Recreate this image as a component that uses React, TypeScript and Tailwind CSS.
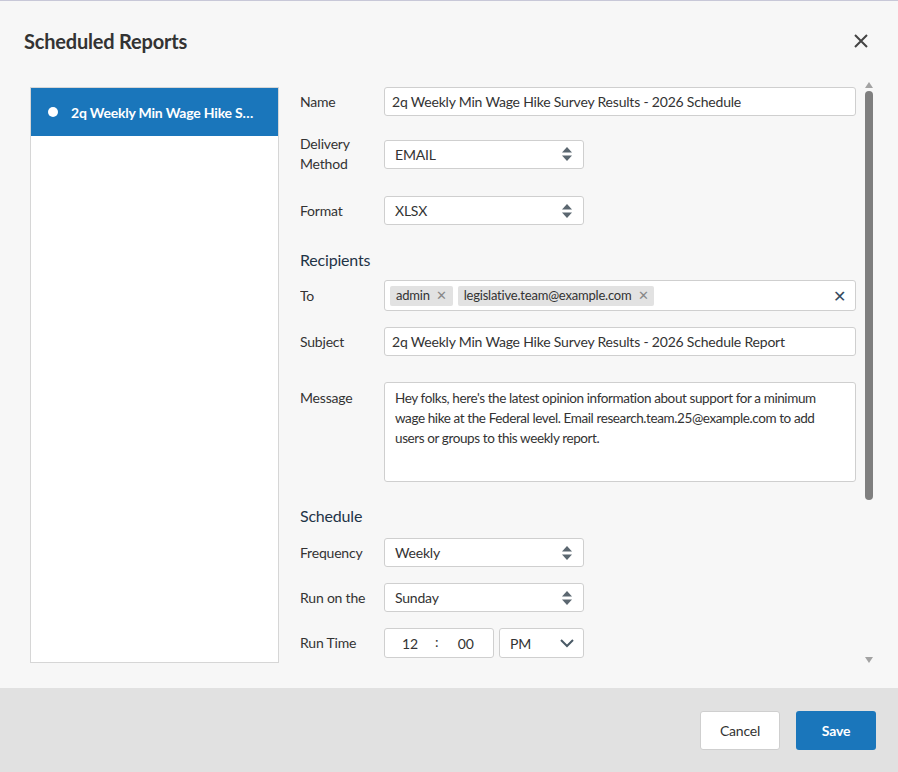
const font = { fontFamily: '"Source Sans Pro", Lato, "Liberation Sans", sans-serif', letterSpacing: '-0.2px' };

function Updown() {
  return (
    <svg width="10" height="14" viewBox="0 0 10 14" className="fill-[#5b6770]">
      <path d="M5 0 L10 5.5 H0 Z" />
      <path d="M5 14 L10 8.5 H0 Z" />
    </svg>
  );
}

function Select({ value }: { value: string }) {
  return (
    <div className="w-[200px] h-[29px] bg-white border border-[#cfcfcf] rounded-[3px] flex items-center justify-between pl-[10px] pr-[11px] text-[14px] text-[#333]">
      <span>{value}</span>
      <Updown />
    </div>
  );
}

function Row({ label, children, className = '' }: { label: React.ReactNode; children: React.ReactNode; className?: string }) {
  return (
    <div className={'flex items-center ' + className}>
      <div className="w-[84px] shrink-0 text-[14px] text-[#333] leading-[20px]">{label}</div>
      {children}
    </div>
  );
}

function Chip({ text }: { text: string }) {
  return (
    <span className="h-[20px] bg-[#e2e2e2] rounded-[2px] px-[6px] flex items-center gap-[6px] text-[13px] text-[#333]">
      {text}
      <span className="text-[#888] text-[13px]">✕</span>
    </span>
  );
}

export default function App() {
  return (
    <div style={font} className="w-[898px] h-[772px] bg-[#f7f7f7] flex flex-col border-t border-[#c8c8d8] overflow-hidden">
      <div className="h-[80px] flex items-center justify-between pl-[24px] pr-[30px] shrink-0">
        <h1 className="text-[20px] font-bold text-[#333]">Scheduled Reports</h1>
        <svg width="14" height="14" viewBox="0 0 14 14" className="stroke-[#444]" strokeWidth="2">
          <path d="M1 1 L13 13 M13 1 L1 13" />
        </svg>
      </div>
      <div className="flex-1 flex pl-[30px] pr-[22px] pb-[25px] gap-[21px] min-h-0">
        <div className="w-[249px] bg-white border border-[#d6d6d6] h-[576px] mt-[6px]">
          <div className="h-[48px] bg-[#1a76bb] flex items-center pl-[17px] gap-[13px] text-white text-[14px] font-bold">
            <span className="w-[10px] h-[10px] shrink-0 rounded-full bg-white" />
            <span className="truncate pr-[20px]">2q Weekly Min Wage Hike Survey Results - 2026</span>
          </div>
        </div>
        <div className="flex-1 flex min-h-0 mt-[6px] h-[576px]">
          <div className="flex-1 overflow-hidden">
            <Row label="Name">
              <div className="flex-1 h-[29px] bg-white border border-[#cfcfcf] rounded-[3px] flex items-center px-[7px] text-[14px] text-[#333]">
                2q Weekly Min Wage Hike Survey Results - 2026 Schedule
              </div>
            </Row>
            <Row label={<>Delivery<br />Method</>} className="mt-[18px]">
              <Select value="EMAIL" />
            </Row>
            <Row label="Format" className="mt-[22px]">
              <Select value="XLSX" />
            </Row>
            <div className="mt-[24px] text-[16px] text-[#1f3447] leading-[22px]">Recipients</div>
            <Row label="To" className="mt-[9px]">
              <div className="flex-1 h-[31px] bg-white border border-[#cfcfcf] rounded-[3px] flex items-center px-[5px] gap-[5px]">
                <Chip text="admin" />
                <Chip text="legislative.team@example.com" />
                <span className="ml-auto mr-[4px] text-[#34495e] text-[16px]">✕</span>
              </div>
            </Row>
            <Row label="Subject" className="mt-[16px]">
              <div className="flex-1 h-[29px] bg-white border border-[#cfcfcf] rounded-[3px] flex items-center px-[7px] text-[14px] text-[#333]">
                2q Weekly Min Wage Hike Survey Results - 2026 Schedule Report
              </div>
            </Row>
            <div className="flex mt-[26px]">
              <div className="w-[84px] shrink-0 text-[14px] text-[#333] pt-[5px]">Message</div>
              <div className="flex-1 h-[100px] bg-white border border-[#cfcfcf] rounded-[3px] px-[10px] py-[5px] text-[13.5px] tracking-[-0.4px] leading-[20px] text-[#333]">
                Hey folks, here's the latest opinion information about support for a minimum wage hike at the Federal level. Email research.team.25@example.com to add users or groups to this weekly report.
              </div>
            </div>
            <div className="mt-[23px] text-[16px] text-[#1f3447] leading-[22px]">Schedule</div>
            <Row label="Frequency" className="mt-[11px]">
              <Select value="Weekly" />
            </Row>
            <Row label="Run on the" className="mt-[16px]">
              <Select value="Sunday" />
            </Row>
            <Row label="Run Time" className="mt-[16px]">
              <div className="w-[110px] h-[30px] bg-white border border-[#cfcfcf] rounded-[3px] flex items-center text-[14px] text-[#333]">
                <span className="w-[50px] text-center">12</span>
                <span className="-mt-[4px]">:</span>
                <span className="flex-1 text-center">00</span>
              </div>
              <div className="ml-[5px] w-[85px] h-[30px] bg-white border border-[#cfcfcf] rounded-[3px] flex items-center justify-between pl-[10px] pr-[9px] text-[14px] text-[#333]">
                PM
                <svg width="14" height="9" viewBox="0 0 14 9" fill="none" stroke="#4a5a66" strokeWidth="2">
                  <path d="M1 1 L7 7 L13 1" />
                </svg>
              </div>
            </Row>
          </div>
          <div className="w-[14px] ml-[6px] flex flex-col items-center -mt-[5px]">
            <svg width="8" height="6" viewBox="0 0 8 6" className="fill-[#a3a3a3]"><path d="M4 0 L8 6 H0 Z" /></svg>
            <div className="w-[8px] h-[409px] mt-[3px] bg-[#7f7f7f] rounded-full" />
            <div className="flex-1" />
            <svg width="8" height="6" viewBox="0 0 8 6" className="fill-[#a3a3a3]"><path d="M4 6 L8 0 H0 Z" /></svg>
          </div>
        </div>
      </div>
      <div className="h-[84px] bg-[#e1e1e1] shrink-0 flex items-center justify-end gap-[16px] pr-[22px]">
        <button className="w-[80px] h-[39px] bg-white border border-[#cfcfcf] rounded-[3px] text-[14px] text-[#333]">Cancel</button>
        <button className="w-[80px] h-[39px] bg-[#1a76bb] rounded-[3px] text-[14px] font-bold text-white">Save</button>
      </div>
    </div>
  );
}
